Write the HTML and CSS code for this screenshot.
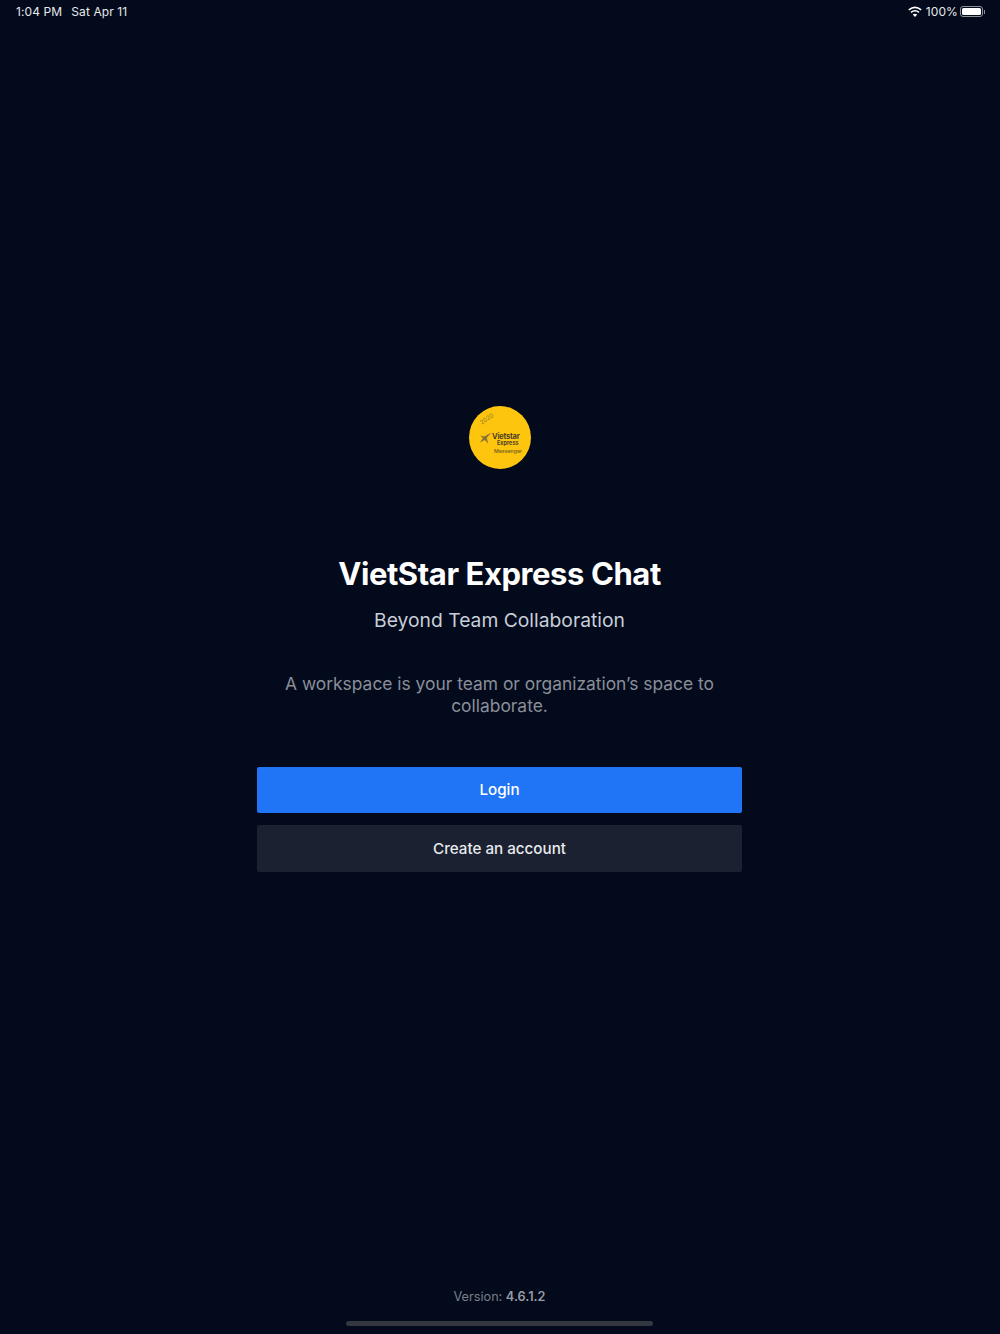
FILE: index.html
```html
<!DOCTYPE html>
<html lang="en">
<head>
  <meta charset="UTF-8">
  <meta name="viewport" content="width=device-width, initial-scale=1.0">
  <title>VietStar Express Chat</title>
  <link rel="stylesheet" href="styles.css">
</head>
<body>
  <div class="status-bar">
    <div class="status-left">
      <span>1:04 PM</span>
      <span>Sat Apr 11</span>
    </div>
    <div class="status-right">
      <svg class="wifi" width="14" height="11" viewBox="0 0 14 11">
        <path d="M7 11 L4.7 8.6 Q7 6.9 9.3 8.6 Z" fill="#fff"/>
        <path d="M3 6.3 Q7 3.1 11 6.3" fill="none" stroke="#fff" stroke-width="1.6"/>
        <path d="M0.8 3.8 Q7 -1.2 13.2 3.8" fill="none" stroke="#fff" stroke-width="1.6"/>
      </svg>
      <span>100%</span>
      <div class="battery"><div class="battery-fill"></div></div>
      <div class="battery-tip"></div>
    </div>
  </div>

  <main class="content">
    <div class="logo">
      <span class="logo-year">2020</span>
      <div class="logo-brand">
        <svg class="logo-star" width="13" height="13" viewBox="0 0 15 14">
          <path d="M14.5 0 L9 6 L10.5 13 L6.8 8.8 L1 11.5 L4.5 6.8 L1.5 3.5 L6 4.8 Z" fill="#8a7434"/>
        </svg>
        <div class="logo-words">
          <span class="logo-name">Vietstar</span>
          <span class="logo-sub">Express</span>
        </div>
      </div>
      <span class="logo-tag">Messenger</span>
    </div>

    <h1>VietStar Express Chat</h1>
    <p class="tagline">Beyond Team Collaboration</p>
    <p class="intro">A workspace is your team or organization’s space to collaborate.</p>

    <div class="buttons">
      <button class="btn btn-login">Login</button>
      <button class="btn btn-create">Create an account</button>
    </div>
  </main>

  <div class="version">Version: <strong>4.6.1.2</strong></div>
  <div class="home-bar"></div>
</body>
</html>
```

FILE: styles.css
```css
* { box-sizing: border-box; }
html, body { height: 100%; }
body {
  margin: 0;
  height: 1334px;
  overflow: hidden;
  display: flex;
  flex-direction: column;
  background: #020a1b;
  color: #fff;
  font-family: Inter, "Liberation Sans", sans-serif;
}
.status-bar {
  height: 23px;
  padding: 0 15px 0 16px;
  display: flex;
  justify-content: space-between;
  align-items: center;
  font-size: 12px;
  letter-spacing: 0.1px;
  color: #e8e9ec;
}
.status-left {
  display: flex;
  gap: 9px;
}
.status-right {
  display: flex;
  align-items: center;
}
.wifi { margin-right: 4px; }
.battery {
  width: 23px;
  height: 11px;
  margin-left: 2px;
  padding: 1px;
  border: 1px solid #8d9097;
  border-radius: 3px;
}
.battery-fill {
  height: 100%;
  background: #fff;
  border-radius: 1.5px;
}
.battery-tip {
  width: 1px;
  height: 4px;
  margin-left: 1px;
  background: #8d9097;
}
.content {
  flex: 1;
  display: flex;
  flex-direction: column;
  align-items: center;
  padding: 383px 1px 0 0;
}
.logo {
  position: relative;
  width: 62px;
  height: 63px;
  margin-left: 1px;
  border-radius: 50%;
  background: #fec50f;
  color: #6e5a22;
}
.logo-year {
  position: absolute;
  left: 10px;
  top: 9px;
  font-size: 6px;
  transform: rotate(-35deg);
  color: #8f7a26;
}
.logo-brand {
  position: absolute;
  left: 10px;
  top: 25px;
  display: flex;
  align-items: center;
}
.logo-words {
  display: flex;
  flex-direction: column;
  font-weight: 700;
  line-height: 1;
  margin-top: 2px;
}
.logo-name {
  font-size: 7.5px;
  letter-spacing: -0.2px;
  color: #4a4026;
}
.logo-sub {
  font-size: 5.5px;
  color: #4a4026;
  margin-left: 5px;
}
.logo-tag {
  position: absolute;
  left: 25px;
  top: 42px;
  font-size: 5.2px;
  font-weight: 600;
  color: #7d6520;
}
h1 {
  margin: 86px 0 0;
  font-size: 31px;
  line-height: 38px;
  font-weight: 700;
  letter-spacing: -0.42px;
}
.tagline {
  margin: 13px 0 0;
  font-size: 19.3px;
  line-height: 28px;
  color: #c9ced9;
}
.intro {
  width: 480px;
  margin: 39px 0 0;
  font-size: 17.4px;
  line-height: 22px;
  text-align: center;
  color: #8a8e99;
}
.buttons {
  width: 485px;
  margin-top: 49.5px;
  display: flex;
  flex-direction: column;
  gap: 12px;
}
.btn {
  height: 46.5px;
  border: none;
  border-radius: 2px;
  color: #fff;
  font-family: inherit;
  font-size: 15.2px;
  font-weight: 500;
}
.btn-login { background: #1f75f6; }
.btn-create {
  background: #1b2130;
  color: #e9eaed;
}
.version {
  padding-right: 1px;
  text-align: center;
  font-size: 12.7px;
  line-height: 16px;
  color: #7b7f89;
}
.version strong {
  font-weight: 600;
  color: #989ba3;
}
.home-bar {
  width: 307px;
  height: 5px;
  margin: 16px auto 8px 346px;
  border-radius: 3px;
  background: #33373f;
}
```
